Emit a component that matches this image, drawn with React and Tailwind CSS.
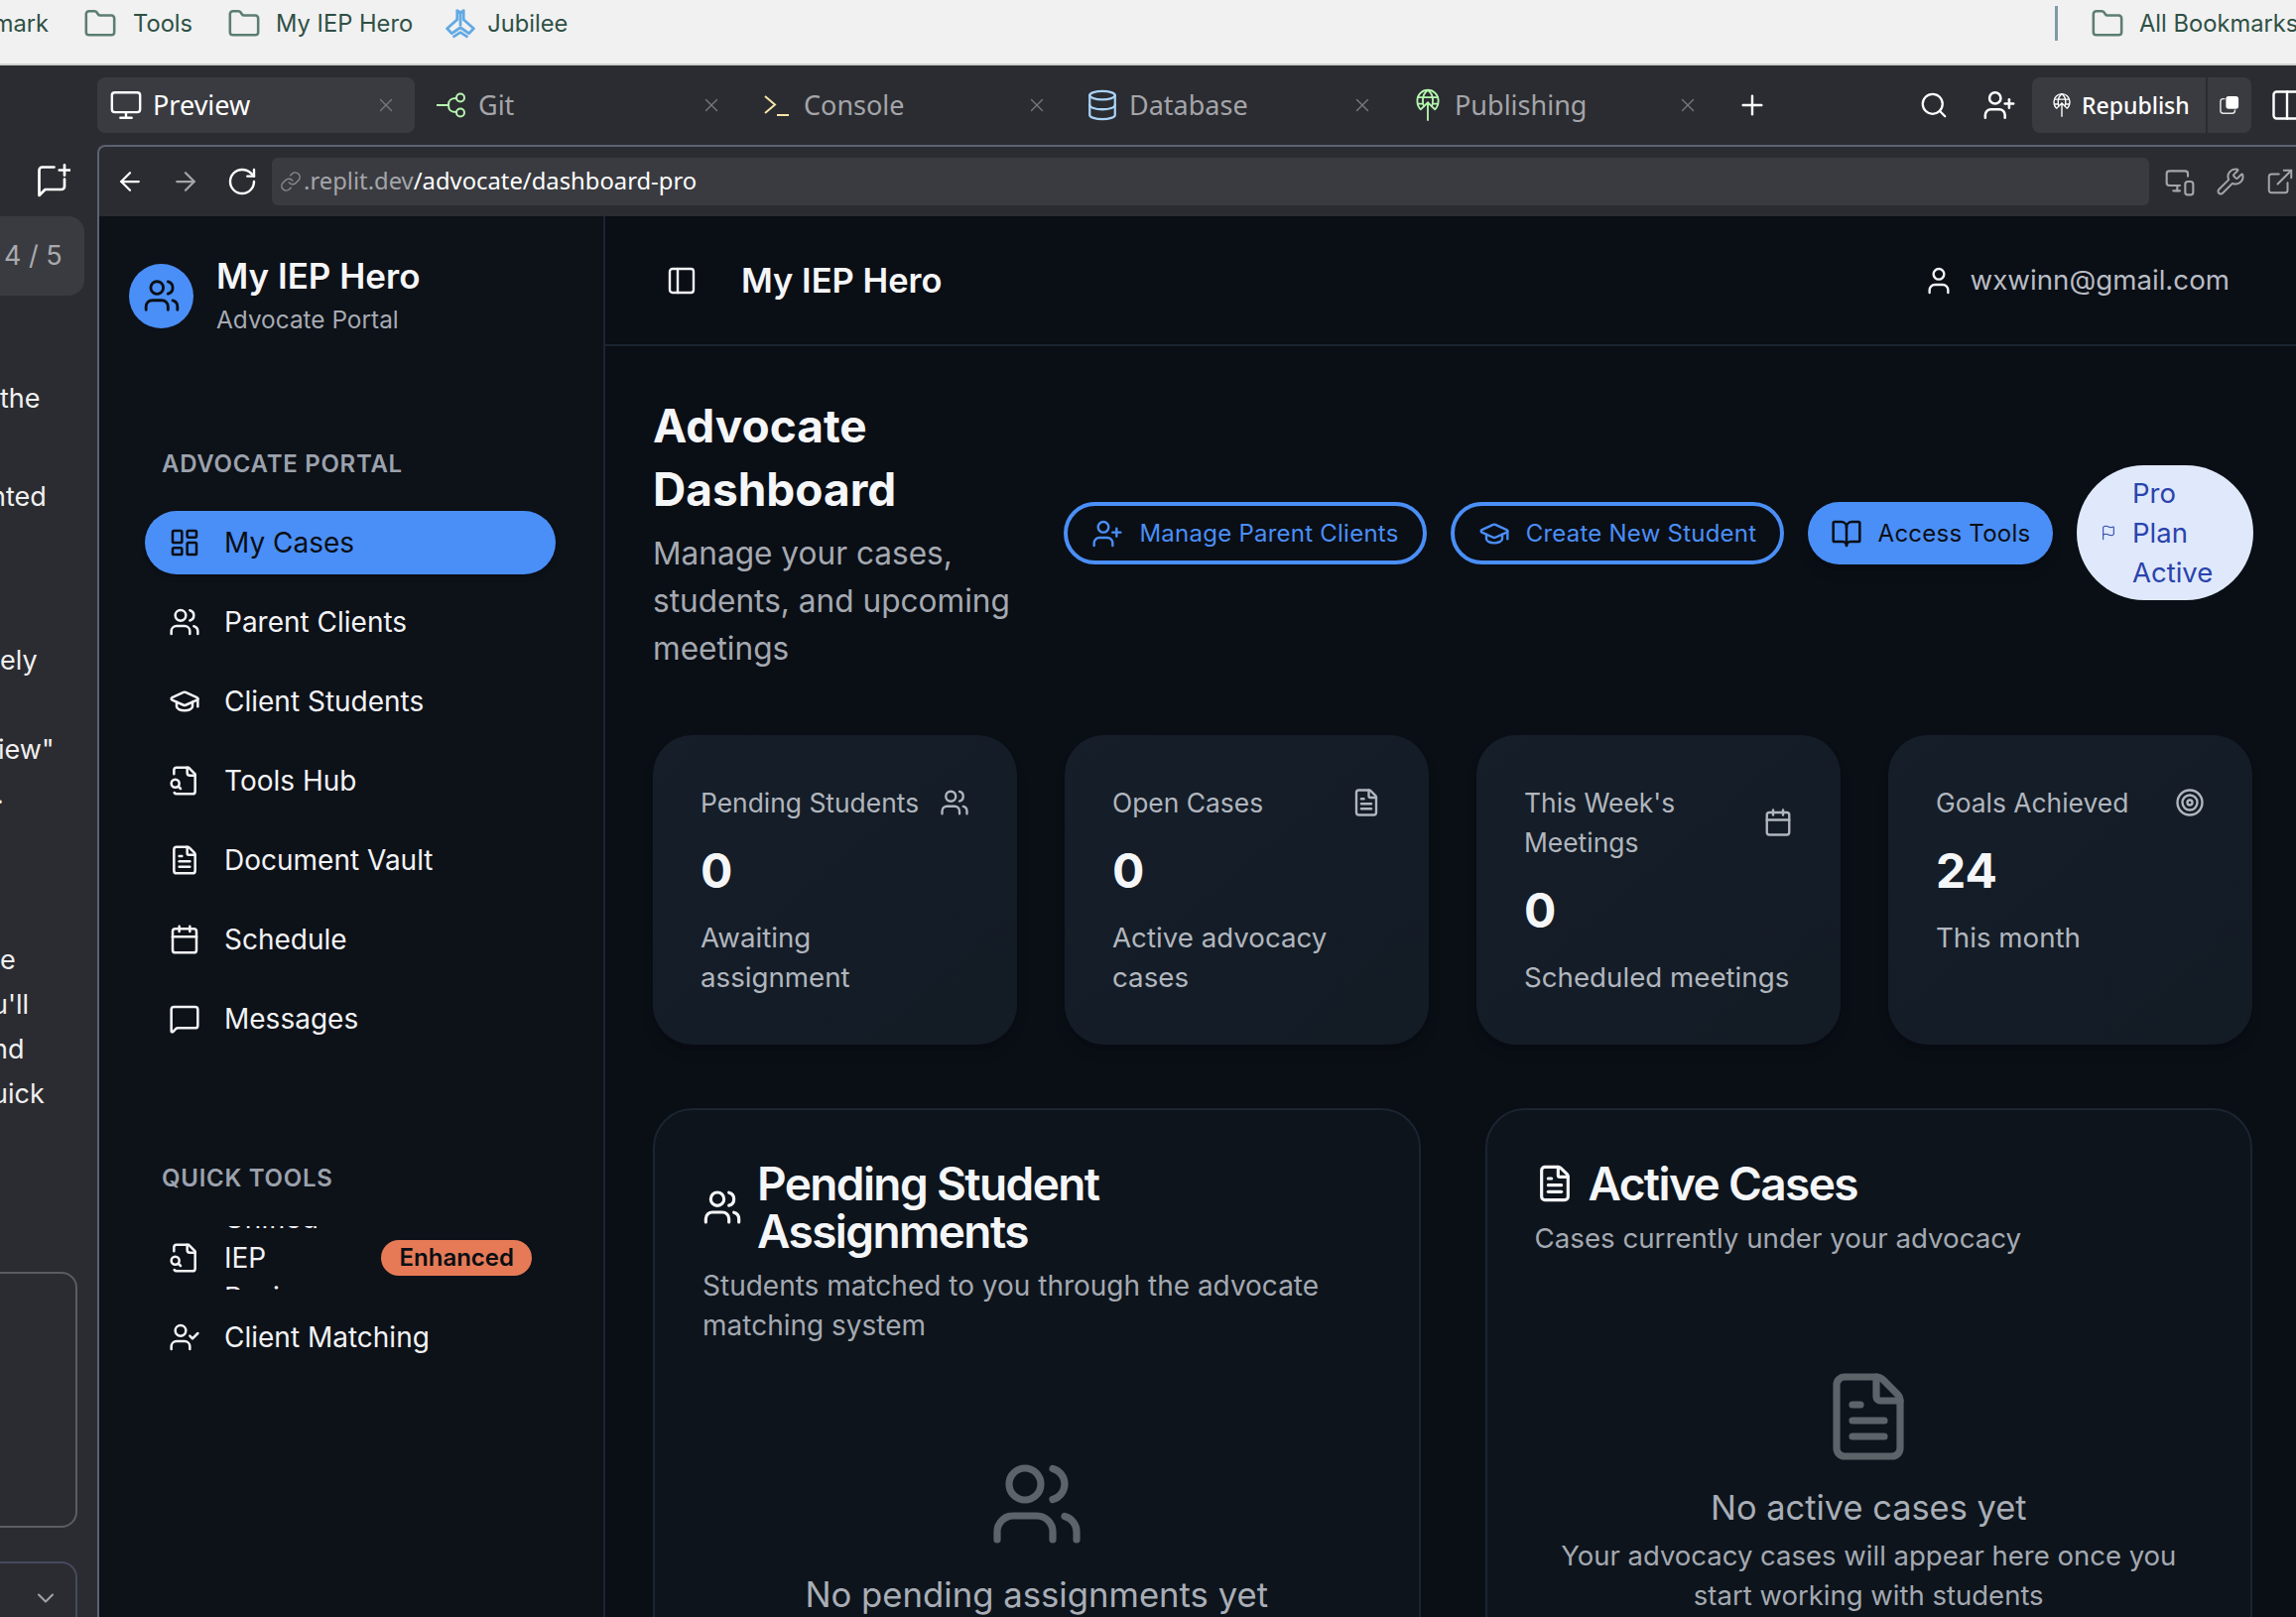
import React from "react";
import {
  ArrowLeft, ArrowRight, BookOpen, Calendar, ChevronDown, Columns2, ExternalLink, FileText, Flag, Folder,
  GraduationCap, LayoutDashboard, Link, MessageSquare, Monitor, MonitorSmartphone, PanelLeft, Plus,
  RotateCw, Search, Target, User, UserCheck, UserPlus, Users, Wrench, X, Database,
} from "lucide-react";

const GitIcon = ({ className }) => (
  <svg viewBox="0 0 30 26" fill="none" stroke="currentColor" strokeWidth="2" className={className}>
    <path d="M0 13h11" />
    <path d="M20 6c-6 0-8 2-8 7s2 7 8 7" />
    <circle cx="24" cy="5.5" r="4" />
    <circle cx="24" cy="20.5" r="4" />
  </svg>
);
const ConsoleIcon = ({ className }) => (
  <svg viewBox="0 0 26 21" fill="none" strokeWidth="2" stroke="#f5e6a8" className={className}>
    <path d="M1 1l10 8.5L1 18" />
    <path d="M13 20h12" />
  </svg>
);
const GlobeUp = ({ className }) => (
  <svg viewBox="0 0 26 36" fill="none" stroke="currentColor" strokeWidth="2" className={className}>
    <path d="M6 23C3 21 1.500 17.500 1.500 13a11.500 11.500 0 0 1 23 0c0 4.500-1.500 8-4.500 10" />
    <path d="M13 1.500C9 4.500 7.500 9 7.500 13c0 3 .5 5 1.500 7M13 1.500c4 3 5.500 7.500 5.500 11.500 0 3-.5 5-1.500 7M1.500 9.500h23M2 16.500h5M19 16.500h5" />
    <path d="M13 35V15M5.500 22.500L13 15l7.500 7.500" />
  </svg>
);
const RepublishSide = ({ className }) => (
  <svg viewBox="0 0 22 22" fill="none" className={className}>
    <path d="M6 4H4a3 3 0 0 0-3 3v10a3 3 0 0 0 3 3h10a3 3 0 0 0 3-3v-1" stroke="#e5e5e5" strokeWidth="1.600" />
    <rect x="7" y="1" width="14" height="14" rx="3" fill="#fff" />
  </svg>
);
const JubileeIcon = ({ className }) => (
  <svg viewBox="0 0 28 28" fill="none" stroke="#62a9e4" strokeWidth="2.600" strokeLinejoin="round" className={className}>
    <path d="M11 1.500V10L1.500 18.500 6 23l8-5.500 8 5.500 4.500-4.500L17 10V1.500L14 3.500z" />
    <path d="M14 4v12" />
    <path d="M7 26.500l7-4.500 7 4.500" />
  </svg>
);
const ChatPlus = ({ className }) => (
  <svg viewBox="0 0 24 24" fill="none" stroke="currentColor" strokeWidth="1.800" strokeLinecap="round" strokeLinejoin="round" className={className}>
    <path d="M13 3H5a2 2 0 0 0-2 2v17l4-4h11a2 2 0 0 0 2-2v-5" />
    <path d="M20 1.500v7M16.500 5h7" />
  </svg>
);
const FileSearchOld = ({ className, strokeWidth = 2 }) => (
  <svg viewBox="0 0 24 24" fill="none" stroke="currentColor" strokeWidth={strokeWidth} strokeLinecap="round" strokeLinejoin="round" className={className}>
    <path d="M14 2v4a2 2 0 0 0 2 2h4" />
    <path d="M4.268 21a2 2 0 0 0 1.727 1H18a2 2 0 0 0 2-2V7l-5-5H6a2 2 0 0 0-2 2v3" />
    <path d="m9 18-1.500-1.500" />
    <circle cx="5" cy="14" r="3" />
  </svg>
);

const Tab = ({ icon, label, active }) => (
  <div className={`w-[320px] h-[56px] shrink-0 rounded-lg flex items-center pl-[15px] pr-[18px] ${active ? "bg-[#3a3b40]" : ""}`}>
    <div className="w-[27px] flex justify-center mr-[14px]">{icon}</div>
    <span className={`flex-1 text-[27px] ${active ? "text-white" : "text-[#a4a5a9]"}`}>{label}</span>
    <X className="w-[22px] h-[22px] text-[#77787c]" strokeWidth={1.5} />
  </div>
);

const NavItem = ({ icon: Icon, label, active }) => (
  <div className={`h-[64px] rounded-full flex items-center pl-[24px] gap-[24px] text-[28px] ${active ? "bg-[#4a8ff7] text-[#0a0e14] shadow-md" : "text-[#f2f3f5]"}`}>
    <Icon className="w-[32px] h-[32px] shrink-0" strokeWidth={1.9} />
    <span>{label}</span>
  </div>
);

const Stat = ({ title, icon: Icon, value, sub }) => (
  <div className="rounded-[40px] bg-gradient-to-br from-[#151e29] to-[#131b25] shadow-lg p-[48px] flex flex-col">
    <div className="flex items-center justify-between gap-[12px] text-[26.4px] leading-[40px] text-[#b1b6be]">
      <span>{title}</span>
      <Icon className="w-[30px] h-[30px] shrink-0" strokeWidth={1.9} />
    </div>
    <div className="mt-[17px] text-[48px] leading-[64px] font-bold text-[#f5f6f8]">{value}</div>
    <div className="mt-[15px] max-w-[268px] text-[27.7px] leading-[40px] text-[#b1b6be]">{sub}</div>
  </div>
);

const SideLines = () => (
  <div className="shrink-0 text-[27px] text-[#f0f0f0] whitespace-nowrap">
    <div className="mt-[82px] leading-[44px]">the</div>
    <div className="mt-[55px] leading-[44px] -ml-[10px]">nted</div>
    <div className="mt-[121px] leading-[44px]">ely</div>
    <div className="mt-[46px] leading-[44px] -ml-[2px]">iew"</div>
    <div className="mt-[1px] leading-[44px] -ml-[4px]">.</div>
    <div className="mt-[123px] leading-[44px]">e</div>
    <div className="leading-[45px] -ml-[8px]">u'll</div>
    <div className="leading-[45px] -ml-[8px]">nd</div>
    <div className="leading-[45px] -ml-[8px]">uick</div>
  </div>
);

export default function App() {
  return (
    <div className="w-[2314px] h-[1630px] overflow-hidden bg-[#2b2c31] font-['Inter',sans-serif] flex flex-col">
      {/* bookmarks */}
      <div className="h-[66px] shrink-0 bg-[#f1f1f1] border-b-2 border-[#cfcfcf] flex items-center pb-[17px] text-[23.7px] text-[#2f5045] whitespace-nowrap">
        <span className="w-[49px] overflow-hidden flex justify-end">mark</span>
        <Folder className="ml-[35px] w-[34px] h-[34px] text-[#5c7d70]" strokeWidth={1.8} />
        <span className="ml-[16px]">Tools</span>
        <Folder className="ml-[35px] w-[34px] h-[34px] text-[#5c7d70]" strokeWidth={1.8} />
        <span className="ml-[15px]">My IEP Hero</span>
        <JubileeIcon className="ml-[33px] w-[30px] h-[30px]" />
        <span className="ml-[12px]">Jubilee</span>
        <div className="ml-auto w-[3px] h-[35px] bg-[#7d9ba6] mr-[33px]" />
        <Folder className="w-[34px] h-[34px] text-[#5c7d70]" strokeWidth={1.8} />
        <span className="ml-[15px] w-[158px] shrink-0">All Bookmarks</span>
      </div>

      {/* tabs */}
      <div className="h-[80px] shrink-0 flex items-center pl-[98px] gap-[8px] font-['Noto_Sans',sans-serif]">
        <Tab active label="Preview" icon={<Monitor className="w-[34px] h-[34px] shrink-0 text-white" strokeWidth={1.7} />} />
        <Tab label="Git" icon={<GitIcon className="w-[30px] h-[26px] shrink-0 text-[#b8f5b0]" />} />
        <Tab label="Console" icon={<ConsoleIcon className="w-[26px] h-[21px] shrink-0" />} />
        <Tab label="Database" icon={<Database className="w-[34px] h-[34px] shrink-0 text-[#a9d2f5]" strokeWidth={1.6} />} />
        <Tab label="Publishing" icon={<GlobeUp className="w-[24px] h-[34px] shrink-0 text-[#b4f7ae]" />} />
        <Plus className="ml-[12px] w-[32px] h-[32px] text-white shrink-0" strokeWidth={1.8} />
        <Search className="ml-[144px] w-[30px] h-[30px] text-white shrink-0" strokeWidth={1.8} />
        <UserPlus className="ml-[26px] w-[34px] h-[34px] text-white shrink-0" strokeWidth={1.8} />
        <div className="ml-[8px] h-[56px] w-[221px] shrink-0 rounded-lg bg-[#3a3b40] flex items-center">
          <div className="w-[177px] flex items-center pl-[21px] gap-[11px] border-r-2 border-[#2b2c31] h-full">
            <GlobeUp className="w-[18px] h-[26px] text-white" />
            <span className="text-[23px] font-medium text-white">Republish</span>
          </div>
          <RepublishSide className="ml-[12px] w-[20px] h-[20px]" />
        </div>
        <Columns2 className="ml-[10px] w-[36px] h-[36px] text-white shrink-0" strokeWidth={1.6} />
      </div>

      {/* body */}
      <div className="flex-1 min-h-0 flex">
        <div className="w-[98px] shrink-0 flex flex-col overflow-hidden">
          <div className="h-[72px] shrink-0 flex items-center justify-end pr-[27px]">
            <ChatPlus className="w-[36px] h-[36px] text-white" />
          </div>
          <div className="mr-[13px] h-[80px] shrink-0 rounded-r-2xl bg-[#3a3b40] flex items-center pl-[4px] text-[27px] text-[#a8aaae]">4 / 5</div>
          <SideLines />
          <div className="mt-[157px] mr-[20px] -ml-[20px] h-[258px] shrink-0 rounded-2xl border-2 border-[#5c5c62]" />
          <div className="mt-[34px] mr-[20px] -ml-[20px] h-[100px] shrink-0 rounded-2xl border-2 border-[#454a5e] flex justify-end pt-[21px] pr-[16px]">
            <ChevronDown className="w-[28px] h-[28px] text-[#a0a2a6]" strokeWidth={1.8} />
          </div>
        </div>

        <div className="flex-1 min-w-0 flex flex-col border-l-2 border-t-2 border-[#5c6272] rounded-tl-lg">
          <div className="h-[70px] shrink-0 flex items-center font-['Noto_Sans',sans-serif]">
            <ArrowLeft className="ml-[16px] w-[30px] h-[30px] text-white shrink-0" strokeWidth={1.8} />
            <ArrowRight className="ml-[26px] w-[30px] h-[30px] text-[#a4a5a9] shrink-0" strokeWidth={1.8} />
            <RotateCw className="ml-[26px] w-[32px] h-[32px] text-white shrink-0" strokeWidth={1.8} />
            <div className="ml-[14px] w-[1892px] h-[48px] shrink-0 rounded-md bg-[#3a3b40] flex items-center pl-[8px] text-[23.8px]">
              <Link className="w-[22px] h-[22px] text-[#88898e]" strokeWidth={1.6} />
              <span className="ml-[2px] text-[#a4a5a9]">.replit.dev</span>
              <span className="text-white">/advocate/dashboard-pro</span>
            </div>
            <MonitorSmartphone className="ml-[15px] w-[32px] h-[32px] text-[#a4a5a9] shrink-0" strokeWidth={1.6} />
            <Wrench className="ml-[20px] w-[30px] h-[30px] text-[#a4a5a9] shrink-0" strokeWidth={1.6} />
            <ExternalLink className="ml-[20px] w-[30px] h-[30px] text-[#a4a5a9] shrink-0" strokeWidth={1.6} />
          </div>

          <div className="flex-1 min-h-0 flex">
            {/* sidebar */}
            <aside className="w-[510px] shrink-0 bg-[#0d1118] border-r-2 border-[#1b2430] pl-[46px] pr-[48px] flex flex-col">
              <div className="-ml-[16px] mt-[38px] flex items-center gap-[23px]">
                <div className="w-[65px] h-[65px] rounded-full bg-[#4a8ff7] flex items-center justify-center">
                  <Users className="w-[38px] h-[38px] text-[#0a0e14]" strokeWidth={1.8} />
                </div>
                <div className="flex flex-col">
                  <span className="text-[35px] leading-[44px] font-semibold text-[#f5f6f8]">My IEP Hero</span>
                  <span className="text-[24.4px] leading-[36px] mt-[4px] text-[#a6abb3]">Advocate Portal</span>
                </div>
              </div>
              <div className="mt-[112px] pl-[17px] text-[24px] leading-[32px] font-semibold tracking-[0.03em] text-[#9ba2ad]">ADVOCATE PORTAL</div>
              <nav className="mt-[31px] flex flex-col gap-[16px]">
                <NavItem icon={LayoutDashboard} label="My Cases" active />
                <NavItem icon={Users} label="Parent Clients" />
                <NavItem icon={GraduationCap} label="Client Students" />
                <NavItem icon={FileSearchOld} label="Tools Hub" />
                <NavItem icon={FileText} label="Document Vault" />
                <NavItem icon={Calendar} label="Schedule" />
                <NavItem icon={MessageSquare} label="Messages" />
              </nav>
              <div className="mt-[113px] pl-[17px] text-[24px] leading-[32px] font-semibold tracking-[0.03em] text-[#9ba2ad]">QUICK TOOLS</div>
              <div className="mt-[32px] flex flex-col gap-[16px]">
                <div className="h-[64px] overflow-hidden flex items-center pl-[24px] pr-[24px] gap-[24px] text-[28px] text-[#f2f3f5]">
                  <FileSearchOld className="w-[32px] h-[32px] shrink-0" strokeWidth={1.9} />
                  <span className="w-[120px] shrink-0 leading-[40px]">Unified IEP Review</span>
                  <span className="ml-auto shrink-0 h-[36px] px-[18px] rounded-full bg-[#e67a56] text-[#0a0e14] text-[24px] font-semibold flex items-center">Enhanced</span>
                </div>
                <NavItem icon={UserCheck} label="Client Matching" />
              </div>
            </aside>

            {/* main */}
            <main className="flex-1 min-w-0 bg-[#0a0e15] flex flex-col">
              <header className="h-[131px] shrink-0 border-b-2 border-[#1b2430] flex items-center pl-[61px] pr-[67px]">
                <PanelLeft className="w-[32px] h-[32px] text-[#f2f3f5]" strokeWidth={1.8} />
                <span className="ml-[44px] text-[34.5px] font-semibold text-[#f5f6f8]">My IEP Hero</span>
                <User className="ml-auto w-[32px] h-[32px] text-[#f2f3f5]" strokeWidth={1.8} />
                <span className="ml-[16px] text-[27.7px] text-[#b8bcc4]">wxwinn@gmail.com</span>
              </header>

              <div className="pl-[48px] pr-[44px] pt-[48px] flex flex-col">
                <div className="flex items-center gap-[24px]">
                  <div className="w-[390px] shrink-0">
                    <h1 className="text-[46px] leading-[64px] font-bold text-[#f5f6f8]">Advocate Dashboard</h1>
                    <p className="mt-[9px] text-[31.6px] leading-[48px] text-[#a4a9b1]">Manage your cases, students, and upcoming meetings</p>
                  </div>
                  <div className="h-[63px] w-[366px] shrink-0 rounded-full border-[4px] border-[#4a8ff7] flex items-center justify-center gap-[16px] text-[24px] tracking-[0.01em] text-[#4a8ff7]">
                    <UserPlus className="w-[32px] h-[32px]" strokeWidth={1.8} />Manage Parent Clients
                  </div>
                  <div className="h-[63px] w-[336px] shrink-0 rounded-full border-[4px] border-[#4a8ff7] flex items-center justify-center gap-[16px] text-[24px] tracking-[0.01em] text-[#4a8ff7]">
                    <GraduationCap className="w-[32px] h-[32px]" strokeWidth={1.8} />Create New Student
                  </div>
                  <div className="h-[63px] w-[247px] shrink-0 rounded-full bg-[#4a8ff7] shadow-lg flex items-center justify-center gap-[16px] text-[24px] tracking-[0.01em] text-[#0a0e14]">
                    <BookOpen className="w-[32px] h-[32px]" strokeWidth={1.9} />Access Tools
                  </div>
                  <div className="w-[178px] h-[136px] mb-[2px] shrink-0 rounded-full bg-[#dfe9fb] flex items-center pl-[24px] gap-[16px] text-[27.5px] leading-[40px] text-[#2b43ad]">
                    <Flag className="w-[16px] h-[16px] shrink-0" strokeWidth={1.6} />
                    <span className="w-[90px]">Pro Plan Active</span>
                  </div>
                </div>

                <div className="mt-[63px] grid grid-cols-4 gap-[48px]">
                  <Stat title="Pending Students" icon={Users} value="0" sub="Awaiting assignment" />
                  <Stat title="Open Cases" icon={FileText} value="0" sub="Active advocacy cases" />
                  <Stat title="This Week's Meetings" icon={Calendar} value="0" sub="Scheduled meetings" />
                  <Stat title="Goals Achieved" icon={Target} value="24" sub="This month" />
                </div>

                <div className="mt-[64px] grid grid-cols-2 gap-[65px] h-[600px]">
                  <section className="rounded-[40px] border-2 border-[#1b2531] bg-[#0d141c] px-[48px] pt-[50px] flex flex-col">
                    <div className="flex items-center gap-[15px]">
                      <Users className="w-[40px] h-[40px] text-[#f5f6f8] shrink-0" strokeWidth={1.9} />
                      <h2 className="w-[420px] text-[46px] leading-[48px] font-semibold tracking-[-0.035em] text-[#f5f6f8]">Pending Student Assignments</h2>
                    </div>
                    <p className="mt-[11px] text-[28px] leading-[40px] text-[#a4a9b1]">Students matched to you through the advocate matching system</p>
                    <div className="mt-[112px] flex flex-col items-center">
                      <Users className="w-[96px] h-[96px] text-[#5c6369]" strokeWidth={1.8} />
                      <div className="mt-[19px] text-[34.7px] leading-[48px] text-[#a9aeb6]">No pending assignments yet</div>
                    </div>
                  </section>
                  <section className="rounded-[40px] border-2 border-[#1b2531] bg-[#0d141c] px-[48px] pt-[50px] flex flex-col">
                    <div className="flex items-center gap-[14px]">
                      <FileText className="w-[40px] h-[40px] text-[#f5f6f8] shrink-0" strokeWidth={1.9} />
                      <h2 className="text-[46px] leading-[48px] font-semibold tracking-[-0.035em] text-[#f5f6f8]">Active Cases</h2>
                    </div>
                    <p className="mt-[11px] text-[27.7px] leading-[40px] text-[#a4a9b1]">Cases currently under your advocacy</p>
                    <div className="mt-[112px] flex flex-col items-center text-center">
                      <FileText className="w-[96px] h-[96px] text-[#5c6369]" strokeWidth={1.8} />
                      <div className="mt-[20px] text-[34.4px] leading-[48px] text-[#a9aeb6]">No active cases yet</div>
                      <p className="mt-[4px] w-[640px] text-[27.5px] leading-[40px] text-[#a4a9b1]">Your advocacy cases will appear here once you start working with students</p>
                    </div>
                  </section>
                </div>
              </div>
            </main>
          </div>
        </div>
      </div>
    </div>
  );
}
